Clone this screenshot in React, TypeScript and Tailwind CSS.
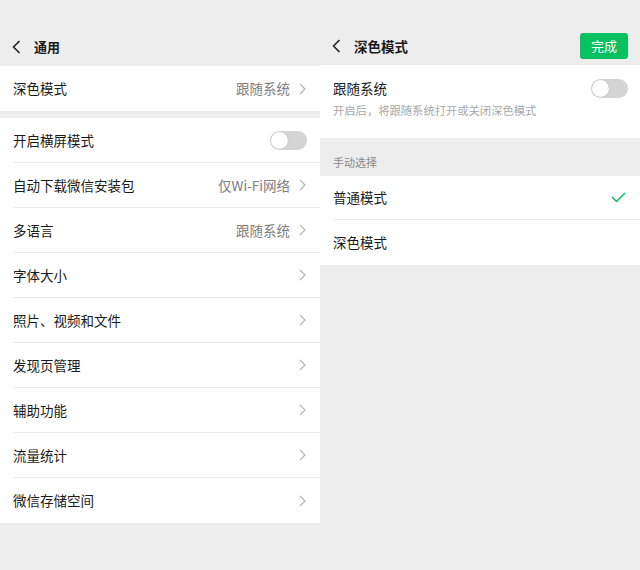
import React from "react";

const font = { fontFamily: '"Noto Sans CJK SC", "Noto Sans", sans-serif' };

const Back = () => (
  <svg width="9" height="14" viewBox="0 0 9 14" className="shrink-0">
    <polyline points="7.5,1 1.5,7 7.5,13" fill="none" stroke="#222" strokeWidth="1.6" />
  </svg>
);

const Chevron = () => (
  <svg width="7" height="12" viewBox="0 0 7 12" className="shrink-0">
    <polyline points="1,1 6,6 1,11" fill="none" stroke="#b5b5b5" strokeWidth="1.2" />
  </svg>
);

const Toggle = () => (
  <div className="w-[37px] h-[19px] rounded-full bg-[#d4d4d4] flex items-center p-[1px]">
    <div className="w-[17px] h-[17px] rounded-full bg-white shadow-[0_0_1px_rgba(0,0,0,0.25)]" />
  </div>
);

type RowProps = {
  label: string;
  value?: string;
  toggle?: boolean;
  last?: boolean;
};

const Row = ({ label, value, toggle, last }: RowProps) => (
  <div className="bg-white pl-[13px]">
    <div
      className={
        "h-[45px] flex items-center justify-between pr-[13px] " +
        (last ? "" : "border-b border-[#ececec]")
      }
    >
      <span className="text-[13.5px] text-[#1a1a1a]">{label}</span>
      {toggle ? (
        <Toggle />
      ) : (
        <div className="flex items-center gap-[9px] pr-[1px]">
          {value && <span className="text-[13.5px] text-[#808080]">{value}</span>}
          <Chevron />
        </div>
      )}
    </div>
  </div>
);

const items: RowProps[] = [
  { label: "开启横屏模式", toggle: true },
  { label: "自动下载微信安装包", value: "仅Wi-Fi网络" },
  { label: "多语言", value: "跟随系统" },
  { label: "字体大小" },
  { label: "照片、视频和文件" },
  { label: "发现页管理" },
  { label: "辅助功能" },
  { label: "流量统计" },
  { label: "微信存储空间", last: true },
];

const General = () => (
  <div className="w-[320px] h-[570px] flex flex-col bg-[#ededed]">
    <div className="h-[66px] pt-[28px] pl-[12px] flex items-center gap-[13px]">
      <Back />
      <span className="text-[13px] font-bold text-[#1a1a1a]">通用</span>
    </div>
    <Row label="深色模式" value="跟随系统" last />
    <div className="h-[7px]" />
    {items.map((it) => (
      <Row key={it.label} {...it} />
    ))}
  </div>
);

const DarkMode = () => (
  <div className="w-[320px] h-[570px] flex flex-col bg-[#ededed]">
    <div className="h-[65px] pt-[27px] pl-[12px] pr-[12px] flex items-center">
      <Back />
      <span className="ml-[13px] text-[13.5px] font-bold text-[#1a1a1a]">深色模式</span>
      <div className="ml-auto w-[48px] h-[26px] rounded-[3px] bg-[#07c160] flex items-center justify-center text-white text-[13px]">
        完成
      </div>
    </div>
    <div className="bg-white h-[73px] pl-[13px] pr-[12px] flex items-start justify-between pt-[13px]">
      <div className="flex flex-col">
        <span className="text-[13.5px] leading-[20px] text-[#1a1a1a]">跟随系统</span>
        <span className="mt-[4px] text-[11.3px] leading-[16px] text-[#a8a8a8]">
          开启后，将跟随系统打开或关闭深色模式
        </span>
      </div>
      <div className="mt-[1px]">
        <Toggle />
      </div>
    </div>
    <div className="h-[38px] flex items-end pb-[6px] pl-[13px]">
      <span className="text-[11px] text-[#8a8a8a]">手动选择</span>
    </div>
    <div className="bg-white pl-[13px]">
      <div className="h-[44px] flex items-center justify-between pr-[14px] border-b border-[#ececec]">
        <span className="text-[13.5px] text-[#1a1a1a]">普通模式</span>
        <svg width="15" height="11" viewBox="0 0 15 11">
          <polyline points="1,5 5.5,9.5 14,1" fill="none" stroke="#07c160" strokeWidth="1.5" />
        </svg>
      </div>
      <div className="h-[45px] flex items-center">
        <span className="text-[13.5px] text-[#1a1a1a]">深色模式</span>
      </div>
    </div>
  </div>
);

export default function App() {
  return (
    <div className="w-[640px] h-[570px] flex bg-[#ededed]" style={font}>
      <General />
      <DarkMode />
    </div>
  );
}
